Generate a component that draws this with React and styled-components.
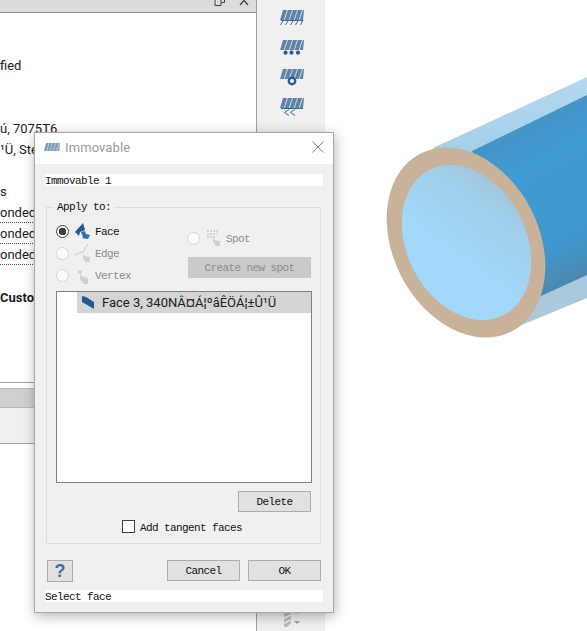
import styled, { createGlobalStyle } from "styled-components";

const GlobalStyle = createGlobalStyle`
    html, body {
        margin: 0;
        padding: 0;
        background-color: #FFFFFF;
        overflow: hidden;
    }
`;

const treeRows = [
    { text: "fied" },
    {},
    {},
    { text: "ú, 7075T6" },
    { text: "¹Ü, Steel" },
    {},
    { text: "s" },
    { text: "onded", dotted: true },
    { text: "onded", dotted: true },
    { text: "onded", dotted: true },
    {},
    { text: "Custom", bold: true }
];

function Hatch({ color = "#5F83A6" }) {
    return (
        <g>
            <polygon points="3,0 24,0 23,10 0,10" fill={color} />
            <path d="M7.5 0 L4.2 10 M12.5 0 L9.2 10 M17.5 0 L14.2 10 M22.5 0 L19.2 10" stroke="#DCE4EC" strokeWidth="0.9" fill="none" />
        </g>
    );
}

function FixedIcon() {
    return (
        <svg width="24" height="15" viewBox="0 0 24 15">
            <Hatch />
            <path d="M3.5 10 L0.5 15 M8.5 10 L5.5 15 M13.5 10 L10.5 15 M18.5 10 L15.5 15 M23 10 L20.5 15 M1 10.5 H23" stroke="#3A6A98" strokeWidth="1" fill="none" />
        </svg>
    );
}

function RollerIcon() {
    return (
        <svg width="24" height="16" viewBox="0 -1 24 16">
            <Hatch />
            <g fill="#2A5D93">
                <circle cx="5.5" cy="12.7" r="2.1" />
                <circle cx="11.5" cy="12.7" r="2.1" />
                <circle cx="18" cy="12.7" r="2.1" />
            </g>
        </svg>
    );
}

function HingeIcon() {
    return (
        <svg width="24" height="17" viewBox="0 0 24 17">
            <Hatch />
            <circle cx="12" cy="12" r="3.2" fill="#FFFFFF" stroke="#2A5D93" strokeWidth="2.4" />
        </svg>
    );
}

function SlideIcon() {
    return (
        <svg width="24" height="18" viewBox="0 0 24 18">
            <Hatch />
            <path d="M1 10.5 H23" stroke="#3A6A98" strokeWidth="1" fill="none" />
            <path d="M9 11.5 L4.5 14.5 L9 17.5 M15 11.5 L10.5 14.5 L15 17.5" stroke="#3A6A98" strokeWidth="1" fill="none" />
        </svg>
    );
}

function DrillIcon() {
    return (
        <svg width="24" height="18" viewBox="0 0 24 18">
            <path d="M4 0 H11 V14 L7 18 H4 Z" fill="#B8BDC2" />
            <path d="M4 4 L11 1 M4 9 L11 6 M4 14 L11 11" stroke="#F0F0F0" strokeWidth="1.4" />
            <path d="M14 4 H20" stroke="#D0D0D0" strokeWidth="1.5" />
            <path d="M14 12 H20 L17 15 Z" fill="#A0A0A0" />
        </svg>
    );
}

function TitleIcon() {
    return (
        <svg width="16" height="8" viewBox="0 0 24 10" preserveAspectRatio="none">
            <Hatch color="#7C9CBC" />
        </svg>
    );
}

function FaceIcon() {
    return (
        <svg width="16" height="20" viewBox="0 0 16 20">
            <polygon points="0,11 8,2 10,9 5,11 4,15" fill="#1F5A90" />
            <path d="M6 11 L8 16 L7 17 L13 18 L15 14 L11 13 L10 10 Z" fill="#2F6EA6" />
        </svg>
    );
}

function EdgeIcon() {
    return (
        <svg width="18" height="20" viewBox="0 0 18 20">
            <path d="M0 12 L9 9 L14 1" stroke="#C4C8CC" strokeWidth="1" fill="none" />
            <path d="M9 11 L9 16 L12 19 L16 19 L16 14 L11 13 Z" fill="#CDD1D4" />
        </svg>
    );
}

function VertexIcon() {
    return (
        <svg width="14" height="20" viewBox="0 0 14 20">
            <circle cx="4" cy="7" r="2" fill="#CDD1D4" />
            <path d="M4 9 L4 14 L8 19 L12 19 L12 13 L7 12 Z" fill="#CDD1D4" />
        </svg>
    );
}

function SpotIcon() {
    return (
        <svg width="14" height="20" viewBox="0 0 14 20">
            <path d="M1 2 V11 M4 2 V11 M7 2 V11 M10 2 V6" stroke="#C4C8CC" strokeWidth="1.4" strokeDasharray="2 1" fill="none" />
            <path d="M6 9 L6 14 L9 18 L13 18 L13 13 L8 12 Z" fill="#CDD1D4" />
        </svg>
    );
}

function TubeDrawing() {
    return (
        <svg width="262" height="631" viewBox="325 0 262 631">
            <defs>
                <linearGradient id="shell" x1="0" y1="0" x2="0" y2="1">
                    <stop offset="0" stopColor="#B2D8EE" />
                    <stop offset="0.5" stopColor="#9CCBE8" />
                    <stop offset="1" stopColor="#B0C8D8" />
                </linearGradient>
                <linearGradient id="bore" x1="0.35" y1="0" x2="0.65" y2="1">
                    <stop offset="0" stopColor="#4A8DB8" />
                    <stop offset="0.35" stopColor="#3F9BD3" />
                    <stop offset="0.8" stopColor="#3E98CE" />
                    <stop offset="1" stopColor="#4C88AE" />
                </linearGradient>
                <linearGradient id="face" gradientUnits="userSpaceOnUse" x1="425" y1="165" x2="475" y2="265">
                    <stop offset="0" stopColor="#A4BCCB" />
                    <stop offset="0.4" stopColor="#A0CFEA" />
                    <stop offset="1" stopColor="#A2D9FB" />
                </linearGradient>
            </defs>
            <polygon points="433,148 587,77 587,298 517,327" fill="url(#shell)" />
            <polygon points="472,151 587,95 587,275 541,296" fill="url(#bore)" />
            <ellipse cx="466" cy="242.5" rx="100" ry="73" transform="rotate(63 466 242.5)" fill="#C9B29A" />
            <ellipse cx="466.5" cy="242.5" rx="81.5" ry="59.5" transform="rotate(63 466.5 242.5)" fill="url(#face)" />
        </svg>
    );
}

export default function App() {
    return (
        <Page>
            <GlobalStyle />
            <Panel>
                <PanelTitle>
                    <svg width="12" height="10" viewBox="0 0 12 10">
                        <path d="M1 3.5 H7 V9.5 H1 Z M4 3 V0.5 H10.5 V6.5 H7.5" stroke="#404040" fill="none" />
                    </svg>
                    <svg width="10" height="10" viewBox="0 0 10 10">
                        <path d="M1 0 L9 9 M9 0 L1 9" stroke="#404040" strokeWidth="1.3" fill="none" />
                    </svg>
                </PanelTitle>
                <Tree>
                    {treeRows.map((row, i) => (
                        <TreeRow key={i} $bold={row.bold} $dotted={row.dotted}>{row.text}</TreeRow>
                    ))}
                </Tree>
                <PanelFooter>
                    <FooterBar />
                    <FooterFill />
                </PanelFooter>
            </Panel>
            <Toolbar>
                <ToolButton><FixedIcon /></ToolButton>
                <ToolButton><RollerIcon /></ToolButton>
                <ToolButton><HingeIcon /></ToolButton>
                <ToolButton><SlideIcon /></ToolButton>
                <BottomTool><DrillIcon /></BottomTool>
            </Toolbar>
            <Viewport>
                <TubeDrawing />
            </Viewport>

            <Dialog>
                <DialogTitle>
                    <TitleIcon />
                    <TitleText>Immovable</TitleText>
                    <CloseButton>
                        <svg width="12" height="12" viewBox="0 0 12 12">
                            <path d="M0.5 0.5 L11.5 11.5 M11.5 0.5 L0.5 11.5" stroke="#808080" fill="none" />
                        </svg>
                    </CloseButton>
                </DialogTitle>
                <DialogBody>
                    <TextLine>Immovable 1</TextLine>
                    <Group>
                        <GroupLabel>Apply to:</GroupLabel>
                        <Options>
                            <OptionColumn>
                                <Option><Radio $checked /><OptionIcon><FaceIcon /></OptionIcon><OptionLabel>Face</OptionLabel></Option>
                                <Option><Radio /><OptionIcon><EdgeIcon /></OptionIcon><OptionLabel $disabled>Edge</OptionLabel></Option>
                                <Option><Radio /><OptionIcon><VertexIcon /></OptionIcon><OptionLabel $disabled>Vertex</OptionLabel></Option>
                            </OptionColumn>
                            <SpotColumn>
                                <Option><Radio /><SpotIconBox><SpotIcon /></SpotIconBox><OptionLabel $disabled>Spot</OptionLabel></Option>
                                <SpotButton>Create new spot</SpotButton>
                            </SpotColumn>
                        </Options>
                        <List>
                            <ListItem>
                                <svg width="13" height="14" viewBox="0 0 13 14">
                                    <polygon points="0,0 4,1 12,6 12,13 0,6" fill="#1F5A90" />
                                </svg>
                                <ListText>Face 3, 340NÂ¤Á¦ºâÊÖÁ¦±Û¹Ü</ListText>
                            </ListItem>
                        </List>
                        <DeleteRow>
                            <Button>Delete</Button>
                        </DeleteRow>
                        <CheckRow>
                            <CheckBox />
                            <CheckLabel>Add tangent faces</CheckLabel>
                        </CheckRow>
                    </Group>
                    <Actions>
                        <HelpButton>?</HelpButton>
                        <Button>Cancel</Button>
                        <Button>OK</Button>
                    </Actions>
                    <TextLine>Select face</TextLine>
                </DialogBody>
            </Dialog>
        </Page>
    );
}

const Page = styled.div`
    position: relative;
    width: 587px;
    height: 631px;
    display: flex;
    overflow: hidden;
    background-color: #FFFFFF;
`;

const Panel = styled.div`
    width: 256px;
    display: flex;
    flex-direction: column;
    border-right: 1px solid #A0A0A0;
    font-family: Roboto, sans-serif;
    font-size: 13px;
    color: #202020;
`;

const PanelTitle = styled.div`
    height: 12px;
    flex-shrink: 0;
    display: flex;
    justify-content: flex-end;
    align-items: flex-end;
    gap: 13px;
    padding-right: 7px;
    background-color: #DCDCDC;
    border-bottom: 1px solid #8E8E8E;
    overflow: hidden;

    svg {
        flex-shrink: 0;
        margin-bottom: 6px;
    }
`;

const Tree = styled.div`
    height: 369px;
    flex-shrink: 0;
    padding-top: 41.5px;
    box-sizing: border-box;
    overflow: hidden;
`;

const TreeRow = styled.div`
    height: 21.1px;
    line-height: 21px;
    white-space: nowrap;
    font-weight: ${props => props.$bold ? 700 : 400};
    background-image: ${props => props.$dotted ? "linear-gradient(to right, #505050 50%, transparent 50%)" : "none"};
    background-size: 2px 1px;
    background-repeat: repeat-x;
    background-position: left bottom;
`;

const PanelFooter = styled.div`
    height: 62px;
    flex-shrink: 0;
    display: flex;
    flex-direction: column;
    border-top: 1px solid #A0A0A0;
    border-bottom: 1px solid #A0A0A0;
    padding-top: 5px;
    box-sizing: border-box;
`;

const FooterBar = styled.div`
    height: 18px;
    background-color: #D0D0D0;
    border-top: 1px solid #B8B8B8;
    border-bottom: 1px solid #B8B8B8;
`;

const FooterFill = styled.div`
    flex: 1;
    background-color: #F0F0F0;
`;

const Toolbar = styled.div`
    width: 68px;
    flex-shrink: 0;
    display: flex;
    flex-direction: column;
    align-items: center;
    padding: 10px 0 0 1px;
    box-sizing: border-box;
    background-color: #F0F0F0;
`;

const ToolButton = styled.div`
    height: 29.3px;
    display: flex;
    justify-content: center;
`;

const BottomTool = styled(ToolButton)`
    height: 22px;
    margin-top: auto;
`;

const Viewport = styled.div`
    flex: 1;
    min-width: 0;
`;

const Dialog = styled.div`
    position: absolute;
    left: 34px;
    top: 132px;
    width: 298px;
    height: 479px;
    display: flex;
    flex-direction: column;
    background-color: #F0F0F0;
    border: 1px solid #A8A8A8;
    box-shadow: 1px 3px 12px rgba(0, 0, 0, 0.3);
    font-family: "Liberation Mono", monospace;
    font-size: 11px;
    letter-spacing: -0.6px;
    color: #101010;
`;

const DialogTitle = styled.div`
    height: 28px;
    flex-shrink: 0;
    display: flex;
    align-items: center;
    gap: 5px;
    padding: 0 9px 3px;
    background-color: #FFFFFF;
`;

const TitleText = styled.span`
    font-family: Roboto, sans-serif;
    font-size: 13px;
    letter-spacing: 0.1px;
    color: #9A9A9A;
`;

const CloseButton = styled.div`
    margin-left: auto;
    display: flex;
`;

const DialogBody = styled.div`
    flex: 1;
    display: flex;
    flex-direction: column;
    padding: 10px 10px 0;
`;

const TextLine = styled.div`
    height: 12px;
    line-height: 14px;
    background-color: #FFFFFF;
    border-radius: 2px;
    white-space: nowrap;
`;

const Group = styled.div`
    position: relative;
    margin: 21px 0 0 1px;
    width: 275px;
    height: 337px;
    box-sizing: border-box;
    padding: 12px 9px 0;
    border: 1px solid #DCDCDC;
`;

const GroupLabel = styled.span`
    position: absolute;
    left: 7px;
    top: -7px;
    padding: 0 3px;
    line-height: 12px;
    background-color: #F0F0F0;
`;

const Options = styled.div`
    display: flex;
`;

const OptionColumn = styled.div`
    width: 131px;
    display: flex;
    flex-direction: column;
`;

const SpotColumn = styled.div`
    padding-top: 7px;
    display: flex;
    flex-direction: column;
`;

const Option = styled.div`
    height: 22px;
    display: flex;
    align-items: center;
`;

const Radio = styled.span`
    width: 11px;
    height: 11px;
    flex-shrink: 0;
    border-radius: 50%;
    border: 1px solid ${props => props.$checked ? "#404040" : "#D4D4D4"};
    background: ${props => props.$checked
        ? "radial-gradient(circle, #404040 0, #404040 3.5px, #FFFFFF 4px)"
        : "#FBFBFB"};
`;

const OptionIcon = styled.span`
    width: 25px;
    flex-shrink: 0;
    display: flex;
    justify-content: center;
    margin-left: 1px;
`;

const SpotIconBox = styled(OptionIcon)`
    width: 18px;
    margin: 0 1px 0 7px;
    justify-content: flex-start;
`;

const OptionLabel = styled.span`
    padding-top: 2px;
    color: ${props => props.$disabled ? "#8C8C8C" : "#101010"};
`;

const Button = styled.div`
    width: 71px;
    height: 19px;
    line-height: 21px;
    text-align: center;
    background-color: #E1E1E1;
    border: 1px solid #ADADAD;
`;

const SpotButton = styled.div`
    margin: 8px 0 0 1px;
    width: 123px;
    height: 21px;
    line-height: 23px;
    text-align: center;
    background-color: #CACACA;
    color: #8C8C8C;
`;

const List = styled.div`
    margin-top: 5px;
    width: 234px;
    height: 190px;
    flex-shrink: 0;
    padding-left: 20px;
    background-color: #FFFFFF;
    border: 1px solid #808080;
`;

const ListItem = styled.div`
    height: 21px;
    display: flex;
    align-items: center;
    gap: 7px;
    padding-left: 5px;
    background-color: #D4D4D4;
`;

const ListText = styled.span`
    font-family: Roboto, sans-serif;
    font-size: 13px;
    letter-spacing: 0;
    color: #202020;
    white-space: nowrap;
`;

const DeleteRow = styled.div`
    margin-top: 8px;
    display: flex;
    justify-content: flex-end;
    width: 255px;
`;

const CheckRow = styled.div`
    margin: 8px 0 0 66px;
    height: 13px;
    display: flex;
    align-items: center;
    gap: 5px;
`;

const CheckBox = styled.span`
    width: 11px;
    height: 11px;
    background-color: #FFFFFF;
    border: 1px solid #404040;
`;

const CheckLabel = styled.span`
    padding-top: 2px;
`;

const Actions = styled.div`
    margin: 16px 0 8px 2px;
    width: 274px;
    display: flex;
    gap: 8px;
`;

const HelpButton = styled.div`
    width: 24px;
    height: 20px;
    margin-right: auto;
    line-height: 20px;
    text-align: center;
    background-color: #E1E1E1;
    border: 1px solid #ADADAD;
    font-family: "Liberation Sans", sans-serif;
    font-size: 18px;
    font-weight: 700;
    letter-spacing: 0;
    color: #3C6E9C;
`;
